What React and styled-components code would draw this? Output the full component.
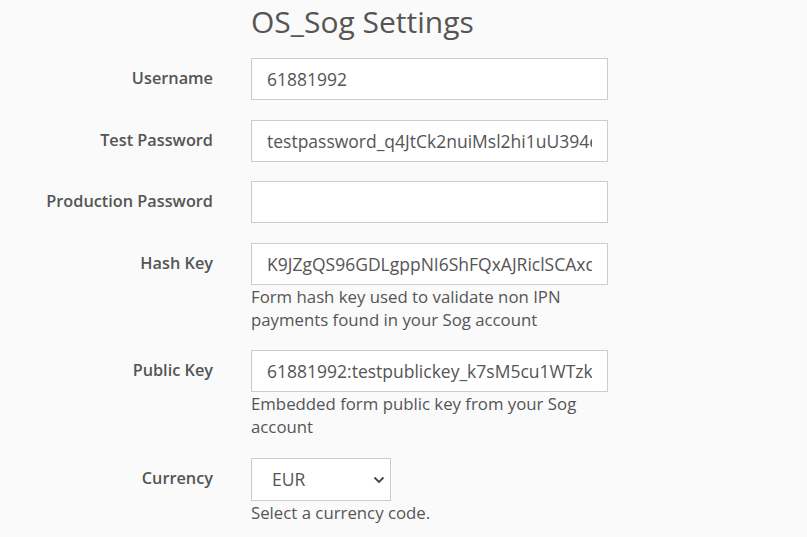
import React from 'react';
import styled, { createGlobalStyle } from 'styled-components';

const GlobalStyle = createGlobalStyle`
    body {
        margin: 0;
        background: #fafafa;
        font-family: "Open Sans", "Noto Sans", sans-serif;
        color: #555;
    }
`

const fields = [
    { name: 'Username', val: '61881992' },
    { name: 'Test Password', val: 'testpassword_q4JtCk2nuiMsl2hi1uU394e8' },
    { name: 'Production Password', val: '' },
    { name: 'Hash Key', val: 'K9JZgQS96GDLgppNI6ShFQxAJRiclSCAxdf', help: 'Form hash key used to validate non IPN payments found in your Sog account' },
    { name: 'Public Key', val: '61881992:testpublickey_k7sM5cu1WTzk', help: 'Embedded form public key from your Sog account' },
]

const Page = styled.div`
    display: grid;
    grid-template-columns: 213px 357px;
    column-gap: 38px;
    padding-top: 1px;
`

const Title = styled.h1`
    grid-column: 2;
    margin: 0 0 16px 0;
    font-size: 30px;
    line-height: 41px;
    font-weight: 400;
    color: #555;
`

const Label = styled.label`
    grid-column: 1;
    text-align: right;
    font-size: 16.3px;
    font-weight: 600;
    line-height: 40px;
    color: #555;
`

const Field = styled.div`
    grid-column: 2;
    margin-bottom: 19.5px;
`

const TextInput = styled.input`
    box-sizing: border-box;
    width: 357px;
    height: 42px;
    margin: 0;
    padding: 0 15px;
    border: 1px solid #ccc;
    border-radius: 0;
    background: #fff;
    font-family: "Open Sans", sans-serif;
    font-size: 17.5px;
    color: #555;
    outline: none;
`

const Help = styled.div`
    font-size: 16.8px;
    line-height: 23px;
    color: #555;
`

const SelectWrap = styled.div`
    position: relative;
    width: 140px;
    height: 43px;
`

const Select = styled.select`
    box-sizing: border-box;
    appearance: none;
    width: 140px;
    height: 43px;
    margin: 0;
    padding: 0 20px;
    border: 1px solid #ccc;
    border-radius: 0;
    background: #fff;
    font-family: "Open Sans", sans-serif;
    font-size: 17.5px;
    color: #555;
`

const Chevron = styled.svg`
    position: absolute;
    right: 6px;
    top: 18px;
    pointer-events: none;
`

const FieldRow = (props) => {
    return (
        <>
            <Label>{props.name}</Label>
            <Field>
                <TextInput type="text" value={props.val} readOnly />
                {props.help && <Help>{props.help}</Help>}
            </Field>
        </>
    );
}

const App = () => {
    return (
        <Page>
            <GlobalStyle />
            <Title>OS_Sog Settings</Title>
            {fields.map((f) => (
                <FieldRow key={f.name} name={f.name} val={f.val} help={f.help} />
            ))}
            <Label>Currency</Label>
            <Field>
                <SelectWrap>
                    <Select defaultValue="EUR">
                        <option>EUR</option>
                        <option>USD</option>
                        <option>GBP</option>
                    </Select>
                    <Chevron width="12" height="8" viewBox="0 0 12 8">
                        <path d="M1.5 1.5 L6 6 L10.5 1.5" fill="none" stroke="#444" strokeWidth="1.8" />
                    </Chevron>
                </SelectWrap>
                <Help>Select a currency code.</Help>
            </Field>
        </Page>
    );
}

export default App;
